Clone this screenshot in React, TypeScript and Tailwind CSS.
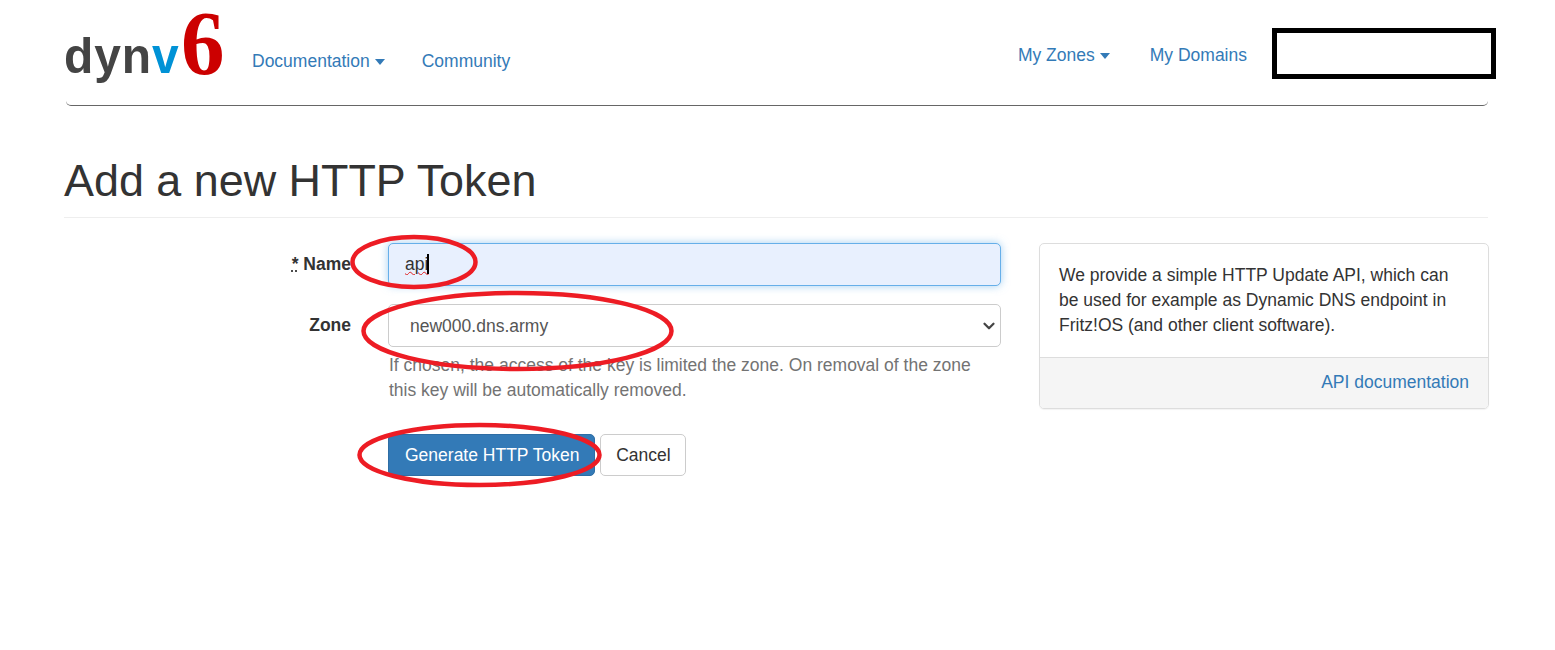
import React from 'react';
import { ChevronDown } from 'lucide-react';

function Caret() {
  return <span className="inline-block ml-[5px] align-middle border-x-[5.5px] border-x-transparent border-t-[6px] border-t-[#337ab7]" />;
}

function Logo() {
  return (
    <div className="relative w-[158px] h-[80px] shrink-0">
      <span className="absolute left-0 top-[20px] origin-bottom scale-y-[1.06] text-[48px] leading-[60px] font-bold tracking-[0.9px] text-[#444444]">
        dyn<span className="text-[#0092d6]">v</span>
      </span>
      <span className="absolute left-[117px] top-[-7px] origin-[50%_84%] scale-y-[1.05] text-[87px] leading-[87px] font-bold text-[#cc0000] font-['Liberation_Serif',serif]">6</span>
    </div>
  );
}

function Annotations() {
  return (
    <svg className="absolute left-0 top-0 pointer-events-none" width="1555" height="650" fill="none" stroke="#ed1c24" strokeWidth="4.5">
      <ellipse cx="414" cy="262" rx="61.5" ry="25" />
      <ellipse cx="517.5" cy="331" rx="154" ry="38" />
      <ellipse cx="479.5" cy="455" rx="120" ry="30" />
    </svg>
  );
}

export default function App() {
  return (
    <div className="relative w-[1555px] h-[650px] overflow-hidden bg-white text-[17.5px] leading-[25px] text-[#333333] font-['Liberation_Sans',Arial,sans-serif]">
      <div className="pl-[64px] w-[1489px]">
        <nav className="h-[106px] ml-[2px] mr-px flex items-start border-b border-[#666666] rounded-b-[5px]">
          <div className="pt-[8px] ml-[-2px]"><Logo /></div>
          <a className="ml-[30px] mt-[49px] text-[#337ab7]">Documentation<Caret /></a>
          <a className="ml-[37px] mt-[49px] text-[#337ab7]">Community</a>
          <div className="ml-auto flex items-start">
            <a className="mt-[43px] text-[#337ab7]">My Zones<Caret /></a>
            <a className="ml-[40px] mt-[43px] text-[#337ab7]">My Domains</a>
            <div className="ml-[25px] mr-[-8px] mt-[28px] w-[224px] h-[51px] border-[5px] border-black bg-white" />
          </div>
        </nav>

        <h1 className="mt-[48px] mr-px pb-[9px] border-b border-[#eeeeee] text-[44.9px] leading-[54px] font-normal text-[#333333]">Add a new HTTP Token</h1>

        <div className="mt-[25px] flex items-start">
          <form className="w-[937px] shrink-0">
            <div className="flex items-center h-[43px]">
              <label className="w-[287px] text-right font-bold"><span className="underline decoration-dotted">*</span> Name</label>
              <div className="relative ml-[37px] w-[613px] h-[43px]">
                <input
                  readOnly
                  value="api"
                  spellCheck={false}
                  className="w-full h-full px-[16px] rounded-[5px] border border-[#66afe9] bg-[#e8f0fe] text-[#333333] shadow-[0_0_8px_rgba(102,175,233,0.6)] outline-none underline decoration-wavy decoration-[#e02020] decoration-1"
                />
                {/* text cursor */}
                <span className="absolute left-[39px] top-[11px] w-[1.5px] h-[20px] bg-black" />
              </div>
            </div>
            <div className="flex items-center h-[43px] mt-[18px]">
              <label className="w-[287px] text-right font-bold">Zone</label>
              <div className="relative ml-[37px] w-[613px] h-[43px] pl-[21px] pt-px rounded-[5px] border border-[#cccccc] bg-white text-[#555555] flex items-center">
                new000.dns.army
                <ChevronDown className="absolute right-[2px] top-[12px] w-[18px] h-[18px] text-[#444444]" strokeWidth={3} />
              </div>
            </div>
            <p className="ml-[325px] mt-[6px] w-[612px] text-[#737373]">If chosen, the access of the key is limited the zone. On removal of the zone this key will be automatically removed.</p>
            <div className="ml-[324px] mt-[31px] flex gap-[5px]">
              <button type="button" className="h-[42px] pl-[16px] pr-[15px] rounded-[5px] border border-[#2e6da4] bg-[#337ab7] text-white">Generate HTTP Token</button>
              <button type="button" className="h-[42px] w-[86px] rounded-[5px] border border-[#cccccc] bg-white text-[#333333]">Cancel</button>
            </div>
          </form>

          <aside className="ml-[38px] w-[450px] rounded-[5px] border border-[#dddddd] shadow-[0_1px_1px_rgba(0,0,0,0.05)] overflow-hidden">
            <div className="px-[19px] pt-[19px] pb-[19px]">We provide a simple HTTP Update API, which can be used for example as Dynamic DNS endpoint in Fritz!OS (and other client software).</div>
            <div className="h-[51px] px-[19px] border-t border-[#dddddd] bg-[#f5f5f5] text-right text-[#337ab7] pt-[12px]">API documentation</div>
          </aside>
        </div>
      </div>
      <Annotations />
    </div>
  );
}
